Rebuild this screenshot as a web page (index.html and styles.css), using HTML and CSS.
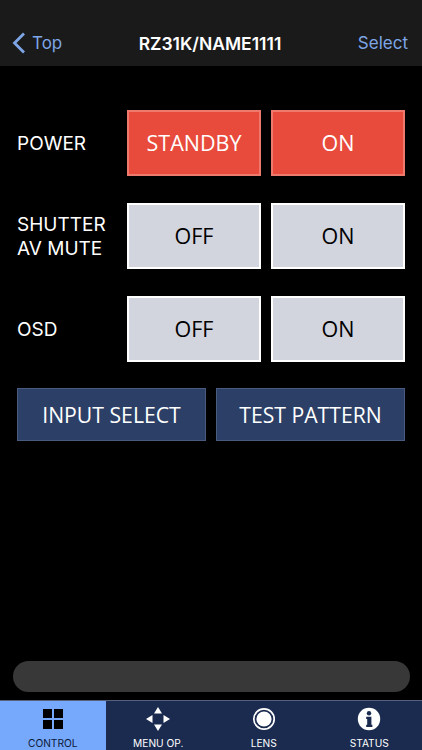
FILE: index.html
```html
<!DOCTYPE html>
<html lang="en">

<head>
    <meta charset="UTF-8">
    <meta name="viewport" content="width=device-width, initial-scale=1.0">
    <title>Control</title>
    <link rel="stylesheet" href="styles.css">
</head>

<body>

    <header class="navbar">
        <div class="nav_back">
            <svg class="nav_chevron" viewBox="0 0 14 22" width="14" height="22">
                <path d="M12 1.5 L2.5 11 L12 20.5" fill="none" stroke="#7ea6e6" stroke-width="2.8" />
            </svg>
            <span>Top</span>
        </div>
        <div class="nav_title">RZ31K/NAME1111</div>
        <div class="nav_select">Select</div>
    </header>

    <main class="content">

        <div class="row">
            <div class="row_label">POWER</div>
            <button class="btn btn_red">STANDBY</button>
            <button class="btn btn_red">ON</button>
        </div>

        <div class="row">
            <div class="row_label">SHUTTER<br>AV MUTE</div>
            <button class="btn btn_grey">OFF</button>
            <button class="btn btn_grey">ON</button>
        </div>

        <div class="row">
            <div class="row_label">OSD</div>
            <button class="btn btn_grey">OFF</button>
            <button class="btn btn_grey">ON</button>
        </div>

        <div class="row_wide">
            <button class="btn_navy">INPUT SELECT</button>
            <button class="btn_navy">TEST PATTERN</button>
        </div>

    </main>

    <div class="pill_wrap">
        <div class="pill"></div>
    </div>

    <nav class="tabbar">
        <div class="tab tab_active">
            <svg viewBox="0 0 24 24" width="24" height="24">
                <rect x="2" y="2" width="9" height="9" fill="#000" />
                <rect x="13" y="2" width="9" height="9" fill="#000" />
                <rect x="2" y="13" width="9" height="9" fill="#000" />
                <rect x="13" y="13" width="9" height="9" fill="#000" />
            </svg>
            <span>CONTROL</span>
        </div>
        <div class="tab">
            <svg viewBox="0 0 24 24" width="24" height="24">
                <path d="M12 0 L16 6.5 L8 6.5 Z M12 24 L16 17.5 L8 17.5 Z M0 12 L6.5 8 L6.5 16 Z M24 12 L17.5 8 L17.5 16 Z" fill="#fff" />
            </svg>
            <span>MENU OP.</span>
        </div>
        <div class="tab">
            <svg viewBox="0 0 24 24" width="24" height="24">
                <circle cx="12" cy="12" r="10.2" fill="none" stroke="#fff" stroke-width="1.7" />
                <circle cx="12" cy="12" r="7.6" fill="#fff" />
            </svg>
            <span>LENS</span>
        </div>
        <div class="tab">
            <svg viewBox="0 0 24 24" width="24" height="24">
                <circle cx="12" cy="12" r="11.2" fill="#fff" />
                <circle cx="12" cy="6.2" r="2.2" fill="#1a2b4f" />
                <path d="M9.2 9.8 H14.4 V17.8 H15.4 V20 H9.2 V17.8 H10.2 V12 H9.2 Z" fill="#1a2b4f" />
            </svg>
            <span>STATUS</span>
        </div>
    </nav>

</body>

</html>
```

FILE: styles.css
```css
* {
    box-sizing: border-box;
}

body {
    margin: 0;
    width: 422px;
    height: 750px;
    display: flex;
    flex-direction: column;
    overflow: hidden;
    background: #000;
    color: #fff;
    font-family: "Open Sans", "Liberation Sans", sans-serif;
}

button {
    font-family: inherit;
    padding: 0 0 2px 0;
    border-radius: 0;
}

.navbar {
    height: 66px;
    flex-shrink: 0;
    padding: 20px 14px 0 12px;
    display: flex;
    align-items: center;
    justify-content: space-between;
    background: #1a1a1a;
    font-family: Inter, "Liberation Sans", sans-serif;
    font-size: 17px;
    color: #7ea6e6;
}

.nav_back {
    display: flex;
    align-items: center;
    gap: 6px;
    width: 80px;
}

.nav_title {
    color: #fff;
    font-size: 17.5px;
    font-weight: 600;
}

.nav_select {
    width: 80px;
    text-align: right;
}

.content {
    flex: 1;
    padding: 44px 17px 0 17px;
}

.row {
    display: flex;
    align-items: center;
    gap: 10px;
    height: 66px;
    margin-bottom: 27px;
}

.row:nth-child(3) {
    margin-bottom: 26px;
}

.row_label {
    width: 100px;
    flex-shrink: 0;
    padding-top: 1px;
    font-family: Inter, "Liberation Sans", sans-serif;
    font-size: 19px;
    line-height: 24px;
}

.btn {
    width: 134px;
    height: 66px;
    flex-shrink: 0;
    font-size: 21.5px;
    border: 2px solid;
}

.btn_red {
    background: #e84a3b;
    border-color: #ee7a6e;
    color: #fff;
}

.btn_grey {
    background: #d2d4de;
    border-color: #fff;
    color: #000;
}

.row_wide {
    display: flex;
    gap: 10px;
}

.btn_navy {
    flex: 1;
    height: 53px;
    padding: 0;
    background: #2c3f66;
    border: 1px solid #4a5b80;
    color: #fff;
    font-size: 21.2px;
    white-space: nowrap;
}

.pill_wrap {
    padding: 0 12px 8px 13px;
}

.pill {
    height: 31px;
    border-radius: 16px;
    background: #383838;
}

.tabbar {
    height: 50px;
    flex-shrink: 0;
    display: flex;
    background: #1a2b4f;
    border-top: 1px solid #56627d;
}

.tab {
    flex: 1;
    display: flex;
    flex-direction: column;
    align-items: center;
    padding-top: 6px;
    gap: 6px;
    font-family: Inter, "Liberation Sans", sans-serif;
    font-size: 10.2px;
    line-height: 12px;
    color: #fff;
}

.tab_active {
    background: #76a8fc;
    color: #0c1a38;
}
```
